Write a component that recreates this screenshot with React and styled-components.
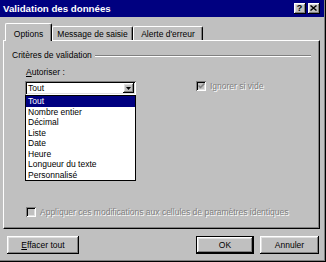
import styled, { createGlobalStyle } from "styled-components";

const GlobalStyle = createGlobalStyle`
  html, body {
    margin: 0;
    padding: 0;
    background: #c0c0c0;
  }
  body {
    width: 326px;
    height: 262px;
    overflow: hidden;
    font-family: "Liberation Sans", Arial, sans-serif;
    font-size: 8.5px;
    color: #000;
  }
`;

const raised = `
  box-shadow: inset -1px -1px 0 #000, inset 1px 1px 0 #fff,
    inset -2px -2px 0 #808080, inset 2px 2px 0 #dfdfdf;
`;

const sunken = `
  box-shadow: inset 1px 1px 0 #808080, inset -1px -1px 0 #fff,
    inset 2px 2px 0 #000, inset -2px -2px 0 #dfdfdf;
`;

const Window = styled.div`
  width: 326px;
  height: 262px;
  box-sizing: border-box;
  background: #c0c0c0;
  display: flex;
  flex-direction: column;
  padding: 0 2px 2px 0;
  box-shadow: inset -1px -1px 0 #000, inset -2px -2px 0 #808080;
`;

const TitleBar = styled.div`
  height: 17px;
  flex-shrink: 0;
  background: #000080;
  display: flex;
  align-items: center;
  justify-content: space-between;
  padding: 0 4px 0 3px;
`;

const TitleText = styled.div`
  color: #fff;
  font-weight: bold;
  font-size: 9.7px;
`;

const TitleButtons = styled.div`
  display: flex;
  gap: 2px;
`;

const TitleButton = styled.div`
  width: 12px;
  height: 11px;
  box-sizing: border-box;
  background: #c0c0c0;
  ${raised}
  display: flex;
  align-items: center;
  justify-content: center;
  font-weight: bold;
  font-size: 9px;
  line-height: 9px;
  padding: 0 1px 1px 0;
`;

const Body = styled.div`
  flex: 1;
  display: flex;
  flex-direction: column;
  padding: 5px 4px 0 3px;
`;

const TabRow = styled.div`
  display: flex;
  align-items: flex-end;
  height: 18px;
  padding-left: 2px;
`;

const Tab = styled.div`
  position: relative;
  z-index: ${(p) => (p.$active ? 1 : 0)};
  width: ${(p) => p.$w}px;
  height: ${(p) => (p.$active ? 18 : 14)}px;
  margin-bottom: ${(p) => (p.$active ? -1 : 0)}px;
  padding-top: ${(p) => (p.$active ? 2 : 0)}px;
  box-sizing: border-box;
  background: #c0c0c0;
  border-top: 1px solid #fff;
  border-left: 1px solid #fff;
  border-right: 1px solid #000;
  border-radius: 2px 2px 0 0;
  box-shadow: inset -1px 0 0 #808080;
  display: flex;
  align-items: center;
  justify-content: center;
`;

const Panel = styled.div`
  width: 317px;
  height: 189px;
  box-sizing: border-box;
  border-top: 1px solid #fff;
  border-left: 1px solid #fff;
  border-right: 1px solid #000;
  border-bottom: 1px solid #000;
  box-shadow: inset -1px -1px 0 #808080;
  display: flex;
  flex-direction: column;
  padding: 10px 8px 11px 8px;
`;

const GroupHeader = styled.div`
  display: flex;
  align-items: center;
  height: 9px;
  line-height: 9px;
  &::after {
    content: "";
    flex: 1;
    margin-left: 3px;
    border-top: 1px solid #808080;
    border-bottom: 1px solid #fff;
  }
`;

const CriteriaRow = styled.div`
  display: flex;
  margin: 7px 0 0 13px;
`;

const LeftColumn = styled.div`
  width: 111px;
  display: flex;
  flex-direction: column;
`;

const FieldLabel = styled.div`
  line-height: 10px;
  height: 10px;
  padding-left: 1px;
  margin-bottom: 4px;
`;

const Combo = styled.div`
  position: relative;
  height: 14px;
  box-sizing: border-box;
  background: #fff;
  ${sunken}
  padding: 2px;
  display: flex;
  align-items: center;
`;

const ComboText = styled.div`
  flex: 1;
  padding-left: 1px;
  line-height: 10px;
`;

const ArrowButton = styled.div`
  width: 11px;
  height: 10px;
  box-sizing: border-box;
  background: #c0c0c0;
  ${raised}
  display: flex;
  align-items: center;
  justify-content: center;
`;

const DropList = styled.div`
  position: absolute;
  top: 100%;
  left: 0;
  width: 111px;
  box-sizing: border-box;
  border: 1px solid #000;
  background: #fff;
  z-index: 2;
`;

const DropItem = styled.div`
  height: 10.5px;
  line-height: 10.5px;
  padding-left: 2px;
  background: ${(p) => (p.$selected ? "#000080" : "transparent")};
  color: ${(p) => (p.$selected ? "#fff" : "#000")};
`;

const CheckRow = styled.div`
  display: flex;
  align-items: center;
  height: 10px;
  margin: ${(p) => p.$margin};
`;

const CheckBox = styled.div`
  width: 10px;
  height: 10px;
  box-sizing: border-box;
  background: #c0c0c0;
  ${sunken}
  display: flex;
  align-items: center;
  justify-content: center;
  flex-shrink: 0;
`;

const DisabledText = styled.span`
  margin-left: 4px;
  color: #808080;
  text-shadow: 1px 1px 0 #fff;
  line-height: 10px;
  white-space: nowrap;
`;

const ButtonRow = styled.div`
  display: flex;
  align-items: center;
  margin-top: 7px;
  padding: 0 1px 0 4px;
  gap: 6px;
`;

const Spacer = styled.div`
  flex: 1;
`;

const Button = styled.div`
  width: ${(p) => p.$w}px;
  height: 18px;
  box-sizing: border-box;
  background: #c0c0c0;
  border: ${(p) => (p.$default ? "1px solid #000" : "none")};
  ${raised}
  display: flex;
  align-items: center;
  justify-content: center;
`;

const items = [
  "Tout",
  "Nombre entier",
  "Décimal",
  "Liste",
  "Date",
  "Heure",
  "Longueur du texte",
  "Personnalisé",
];

export default function App() {
  return (
    <>
      <GlobalStyle />
      <Window>
        <TitleBar>
          <TitleText>Validation des données</TitleText>
          <TitleButtons>
            <TitleButton>?</TitleButton>
            <TitleButton>
              <svg width="7" height="6" viewBox="0 0 7 6">
                <path d="M0.5 0.5 L6.5 5.5 M6.5 0.5 L0.5 5.5" stroke="#000" strokeWidth="1.4" />
              </svg>
            </TitleButton>
          </TitleButtons>
        </TitleBar>
        <Body>
          <TabRow>
            <Tab $active $w={47}>Options</Tab>
            <Tab $w={81}>Message de saisie</Tab>
            <Tab $w={70}>Alerte d'erreur</Tab>
          </TabRow>
          <Panel>
            <GroupHeader>Critères de validation</GroupHeader>
            <CriteriaRow>
              <LeftColumn>
                <FieldLabel>
                  <u>A</u>utoriser :
                </FieldLabel>
                <Combo>
                  <ComboText>Tout</ComboText>
                  <ArrowButton>
                    <svg width="5" height="3" viewBox="0 0 5 3">
                      <path d="M0 0 H5 L2.5 3 Z" fill="#000" />
                    </svg>
                  </ArrowButton>
                  <DropList>
                    {items.map((it, i) => (
                      <DropItem key={it} $selected={i === 0}>
                        {it}
                      </DropItem>
                    ))}
                  </DropList>
                </Combo>
              </LeftColumn>
              <CheckRow $margin="14px 0 0 60px">
                <CheckBox>
                  <svg width="7" height="6" viewBox="0 0 7 6">
                    <path d="M0.5 2.5 L2.5 4.5 L6.5 0.5" stroke="#808080" strokeWidth="1.5" fill="none" />
                  </svg>
                </CheckBox>
                <DisabledText>Ignorer si vide</DisabledText>
              </CheckRow>
            </CriteriaRow>
            <Spacer />
            <CheckRow $margin="0 0 0 14px">
              <CheckBox />
              <DisabledText>
                Appliquer ces modifications aux cellules de paramètres identiques
              </DisabledText>
            </CheckRow>
          </Panel>
          <ButtonRow>
            <Button $w={72}>
              <span>
                <u>E</u>ffacer tout
              </span>
            </Button>
            <Spacer />
            <Button $w={58} $default>
              OK
            </Button>
            <Button $w={59}>Annuler</Button>
          </ButtonRow>
        </Body>
      </Window>
    </>
  );
}
